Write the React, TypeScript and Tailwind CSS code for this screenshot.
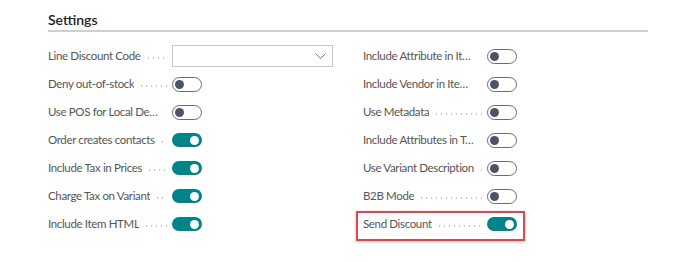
import React from "react";

type Row = { label: string; kind: "dropdown" | "on" | "off"; highlight?: boolean };

const left: Row[] = [
  { label: "Line Discount Code", kind: "dropdown" },
  { label: "Deny out-of-stock", kind: "off" },
  { label: "Use POS for Local Delivery", kind: "off" },
  { label: "Order creates contacts", kind: "on" },
  { label: "Include Tax in Prices", kind: "on" },
  { label: "Charge Tax on Variant", kind: "on" },
  { label: "Include Item HTML", kind: "on" },
];

const right: Row[] = [
  { label: "Include Attribute in Item Title", kind: "off" },
  { label: "Include Vendor in Item Title", kind: "off" },
  { label: "Use Metadata", kind: "off" },
  { label: "Include Attributes in Tags", kind: "off" },
  { label: "Use Variant Description", kind: "off" },
  { label: "B2B Mode", kind: "off" },
  { label: "Send Discount", kind: "on", highlight: true },
];

function Toggle({ on }: { on: boolean }) {
  return on ? (
    <div className="w-[30px] h-[14px] rounded-full bg-[#00848a] flex items-center justify-end pr-[3px]">
      <div className="w-[9px] h-[9px] rounded-full bg-white" />
    </div>
  ) : (
    <div className="w-[30px] h-[15px] rounded-full border border-[#6b6b6b] bg-white flex items-center pl-[2px]">
      <div className="w-[9px] h-[9px] rounded-full bg-[#4b5567]" />
    </div>
  );
}

function Field({ row }: { row: Row }) {
  return (
    <div className="relative h-[28px] flex items-center">
      {row.highlight && (
        <div className="absolute -left-[7px] top-[1px] w-[169px] h-[30px] border-2 border-[#e0474c] shadow-[0_1px_3px_rgba(0,0,0,0.25)]" />
      )}
      <div className="w-[124px] flex items-center pr-[5px] shrink-0">
        <span className="truncate max-w-[112px] text-[11.5px] tracking-[-0.35px] text-[#555555] leading-[16px]">{row.label}</span>
        <span className="flex-1 ml-[5px] h-[2px] mt-[3px] bg-[radial-gradient(circle,#c6c6c6_0.8px,transparent_1px)] bg-[length:5px_2px] bg-repeat-x" />
      </div>
      {row.kind === "dropdown" ? (
        <div className="w-[161px] h-[22px] border border-[#c6c6c6] bg-white flex items-center justify-end pr-[6px]">
          <svg width="11" height="6" viewBox="0 0 11 6" fill="none">
            <path d="M0.5 0.5 L5.5 5.5 L10.5 0.5" stroke="#7a7a7a" strokeWidth="1" />
          </svg>
        </div>
      ) : (
        <Toggle on={row.kind === "on"} />
      )}
    </div>
  );
}

export default function App() {
  return (
    <div className="w-[700px] h-[262px] bg-white pt-[10px] pl-[48px]" style={{ fontFamily: "Lato, 'Open Sans', sans-serif" }}>
      <div className="w-[600px] border-b-2 border-[#cfcfcf] leading-[20px] text-[14px] font-semibold text-[#212121]">
        Settings
      </div>
      <div className="mt-[10px] flex gap-[30px]">
        <div className="w-[285px] flex flex-col">
          {left.map((r) => (
            <Field key={r.label} row={r} />
          ))}
        </div>
        <div className="w-[155px] flex flex-col">
          {right.map((r) => (
            <Field key={r.label} row={r} />
          ))}
        </div>
      </div>
    </div>
  );
}
